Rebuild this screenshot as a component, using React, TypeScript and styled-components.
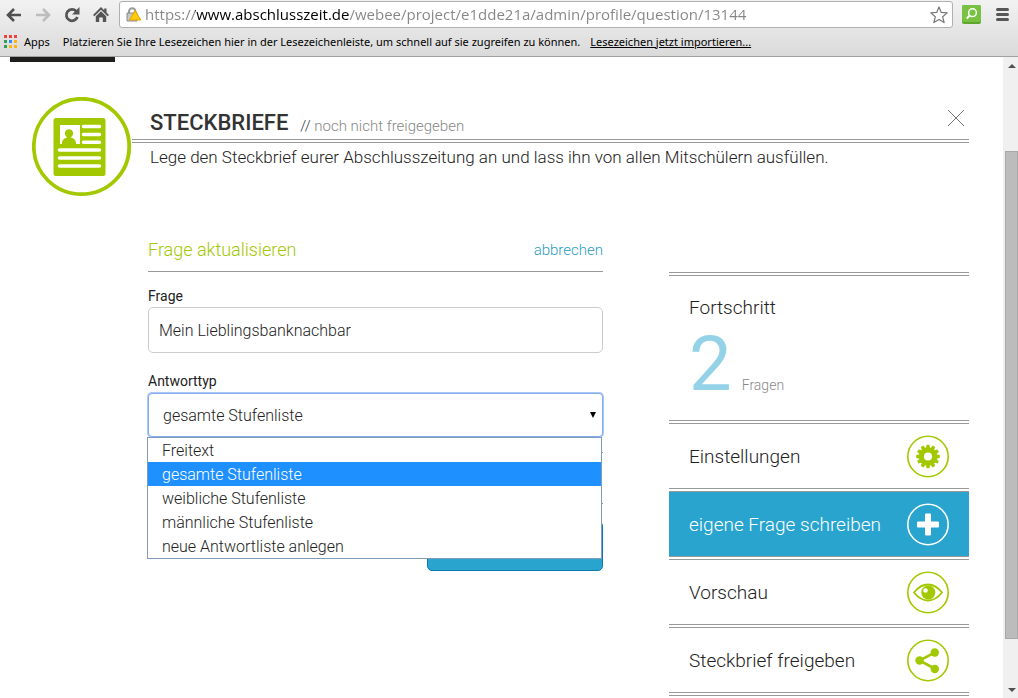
import React, { useState } from "react";
import styled, { createGlobalStyle } from "styled-components";

const GREEN = "#a2c800";
const BLUE = "#28a4cf";

const GlobalStyle = createGlobalStyle`
  *, *::before, *::after { box-sizing: border-box; }
  body { margin: 0; background: #fff; color: #222; font-family: Roboto, sans-serif; font-weight: 300; }
  button, input, select { font: inherit; color: inherit; margin: 0; padding: 0; }
  button { background: none; border: 0; cursor: pointer; }
  a { color: inherit; }
`;

const Window = styled.div`
  display: flex;
  flex-direction: column;
  height: 100vh;
  overflow: hidden;
`;

/* Browser chrome */
const Chrome = styled.header`
  flex: none;
  background: linear-gradient(#f2f2f2, #dadada);
  border-bottom: 1px solid #a0a0a0;
  font-family: "Noto Sans", sans-serif;
  font-weight: 400;
  color: #000;
`;
const Toolbar = styled.div`
  display: flex;
  align-items: center;
  height: 29px;
  padding: 0 3px 0 4px;
`;
const ToolButton = styled.button<{ $width: number }>`
  display: flex;
  align-items: center;
  justify-content: center;
  width: ${(p) => p.$width}px;
  height: 28px;
`;
const Omnibox = styled.div`
  flex: 1;
  display: flex;
  align-items: center;
  height: 27px;
  padding: 0 4px 0 6px;
  background: #fff;
  border: 1px solid #b0b0b0;
  border-radius: 3px;
`;
const Address = styled.input`
  flex: 1;
  min-width: 0;
  height: 24px;
  margin-left: 3px;
  padding-bottom: 2px;
  border: 0;
  outline: 0;
  font-family: "Open Sans", sans-serif;
  font-size: 15px;
  background: linear-gradient(90deg, #858585 0 50px, #000 50px 204px, #858585 204px);
  background-clip: text;
  -webkit-background-clip: text;
  -webkit-text-fill-color: transparent;
`;
const Bookmarks = styled.nav`
  display: flex;
  align-items: center;
  height: 27px;
  padding: 0 4px 3px;
  font-size: 11px;
  white-space: nowrap;
`;
const AppsLink = styled.a`
  display: flex;
  align-items: center;
  gap: 7px;
  margin-right: 13px;
  text-decoration: none;
`;
const ImportLink = styled.a`
  margin-left: 10px;
`;

/* Page */
const Viewport = styled.div`
  flex: 1;
  min-height: 0;
  display: flex;
`;
const Page = styled.main`
  flex: 1;
  min-width: 0;
  overflow: hidden;
  padding-right: 34px;
`;
const Tab = styled.div`
  width: 105px;
  height: 5px;
  margin-left: 10px;
  background: #1e1e1c;
`;
const Hero = styled.section`
  display: flex;
  margin: 35px 0 35px 32px;
`;
const HeroBody = styled.div`
  flex: 1;
`;
const TitleRow = styled.div`
  display: flex;
  align-items: center;
  height: 42px;
  padding: 10px 4px 0 18px;
`;
const Title = styled.h1`
  margin: 0;
  font-size: 22px;
  line-height: 32px;
  font-weight: 500;
  color: #333;
`;
const Status = styled.p`
  flex: 1;
  margin: 5px 0 0 12px;
  font-size: 15px;
  line-height: 24px;
  color: #888;
`;
const Slashes = styled.span`
  color: #333;
`;
const CloseButton = styled.button`
  display: flex;
  margin-bottom: 10px;
`;
const Rule = styled.div`
  height: 4px;
  border: solid #999;
  border-width: 1px 0;
`;
const Lead = styled.p`
  margin: 0 0 0 18px;
  font-size: 17px;
  line-height: 28px;
`;
const Columns = styled.div`
  display: flex;
  align-items: flex-start;
  gap: 66px;
  padding-left: 148px;
`;

/* Question form */
const Form = styled.form`
  flex: 1;
  min-width: 0;
`;
const FormHead = styled.div`
  display: flex;
  align-items: center;
  justify-content: space-between;
  height: 40px;
  padding-bottom: 4px;
  border-bottom: 1px solid #999;
  margin-bottom: 13px;
`;
const FormTitle = styled.h2`
  margin: 0;
  font-size: 18px;
  line-height: 24px;
  font-weight: 300;
  color: ${GREEN};
`;
const Cancel = styled.a`
  font-size: 15px;
  color: #2a9bc6;
  text-decoration: none;
`;
const Field = styled.div`
  margin-bottom: 17px;
`;
const Label = styled.label`
  display: block;
  font-size: 14px;
  line-height: 22px;
  font-weight: 400;
`;
const TextInput = styled.input`
  display: block;
  width: 100%;
  height: 46px;
  padding: 0 10px;
  border: 1px solid #ccc;
  border-radius: 5px;
  outline: 0;
  font-size: 16px;
`;
const SelectBox = styled.div`
  position: relative;
  margin-top: 1px;
`;
const Select = styled.select`
  display: block;
  appearance: none;
  width: 100%;
  height: 44px;
  padding: 0 14px;
  background: #fff;
  border: 1px solid #86aaf0;
  box-shadow: 0 0 0 1px #a9c8f6;
  border-radius: 4px;
  outline: 0;
  font-size: 16px;
`;
const Arrow = styled.svg`
  position: absolute;
  right: 6px;
  top: 18px;
  pointer-events: none;
`;
const Options = styled.ul`
  position: absolute;
  z-index: 1;
  top: 44px;
  left: -1px;
  right: 1px;
  margin: 0;
  padding: 0;
  list-style: none;
  background: #fff;
  border: 1px solid #7f9db9;
`;
const Option = styled.li<{ $selected: boolean }>`
  padding: 2px 0 0 14px;
  font-size: 16px;
  line-height: 22px;
  cursor: default;
  color: ${(p) => (p.$selected ? "#fff" : "#222")};
  background: ${(p) => (p.$selected ? "#1e90ff" : "#fff")};
`;
const Divider = styled.hr<{ $gap: number }>`
  height: 1px;
  margin: ${(p) => p.$gap}px 0 0;
  border: 0;
  background: #999;
`;
const Submit = styled.button`
  display: block;
  width: 176px;
  height: 50px;
  margin: 17px 0 0 auto;
  background: ${BLUE};
  border: 1px solid #0f7aa8;
  border-radius: 5px;
`;

/* Sidebar */
const Sidebar = styled.aside`
  width: 300px;
  padding-top: 40px;
`;
const Progress = styled.section`
  height: 144px;
  padding: 18px 20px 0;
`;
const ProgressTitle = styled.h3`
  margin: 0;
  font-size: 19px;
  line-height: 28px;
  font-weight: 300;
`;
const Count = styled.div`
  display: flex;
  align-items: baseline;
  gap: 10px;
  font-size: 14px;
  color: #888;
`;
const Number = styled.strong`
  font-size: 76px;
  line-height: 84px;
  font-weight: 400;
  color: #93d2e7;
`;
const Action = styled.button<{ $active?: boolean }>`
  display: flex;
  align-items: center;
  justify-content: space-between;
  width: 100%;
  height: 64px;
  padding: 0 20px;
  font-size: 19px;
  text-align: left;
  color: ${(p) => (p.$active ? "#fff" : "#222")};
  background: ${(p) => (p.$active ? BLUE : "#fff")};
`;

/* Scrollbar */
const Scrollbar = styled.div`
  display: flex;
  flex-direction: column;
  width: 15px;
  padding-left: 2px;
  background: #f0f0f0;
`;
const ScrollButton = styled.button`
  display: flex;
  align-items: center;
  justify-content: center;
  height: 17px;
`;
const Track = styled.div<{ $grow: number }>`
  flex: ${(p) => p.$grow};
`;
const Thumb = styled(Track)`
  background: #bcbcbc;
  border: 1px solid #a8a8a8;
`;

const BackIcon = () => (
  <svg width="16" height="14" viewBox="0 0 16 14" fill="none" stroke="#505050" strokeWidth="2.6">
    <path d="M8 1 2 7l6 6M2 7h13" />
  </svg>
);
const ForwardIcon = () => (
  <svg width="16" height="14" viewBox="0 0 16 14" fill="none" stroke="#bdbdbd" strokeWidth="2.6">
    <path d="m8 1 6 6-6 6M14 7H1" />
  </svg>
);
const ReloadIcon = () => (
  <svg width="16" height="16" viewBox="0 0 16 16">
    <path d="M12.2 4.2A5.7 5.7 0 1 0 13.4 10" fill="none" stroke="#555" strokeWidth="2.8" />
    <path d="M15.5 0v7.5H8z" fill="#555" />
  </svg>
);
const HomeIcon = () => (
  <svg width="16" height="16" viewBox="0 0 16 16">
    <path d="M8 0 0 8l1.4 1.2L8 2.8l6.6 6.4L16 8l-2.5-2.5V1.5h-2.3v1.8z" fill="#555" />
    <path d="m8 4.3 5.2 5V15H9.8v-4.5H6.2V15H2.8V9.3z" fill="#555" />
  </svg>
);
const LockIcon = () => (
  <svg width="16" height="16" viewBox="0 0 16 16">
    <path d="M3 7V4.500a3.200 3.200 0 0 1 6.500 0V7" fill="none" stroke="#999" strokeWidth="2" />
    <path d="M1 6h10v8H1z" fill="#c8c8c8" stroke="#888" />
    <path d="M9 3.500 14.800 13H3.500z" fill="#ffcb0b" stroke="#e2a300" strokeLinejoin="round" />
  </svg>
);
const StarIcon = () => (
  <svg width="18" height="18" viewBox="0 0 18 18" fill="#fff" stroke="#777" strokeWidth="1.2" strokeLinejoin="round">
    <path d="m9 1 2.300 5.400 5.900.5-4.500 3.900 1.400 5.800L9 13.500l-5.100 3.100 1.400-5.800L.8 6.900l5.900-.5z" />
  </svg>
);
const ExtensionIcon = () => (
  <svg width="19" height="19" viewBox="0 0 19 19">
    <rect width="19" height="19" rx="2" fill="#5fa62f" />
    <rect width="19" height="17" rx="2" fill="#78c143" />
    <circle cx="10.5" cy="7.7" r="3.9" fill="none" stroke="#fff" strokeWidth="1.5" />
    <path d="m7.700 10.500-3 3" stroke="#fff" strokeWidth="1.8" />
  </svg>
);
const MenuIcon = () => (
  <svg width="13" height="13" viewBox="0 0 13 13" stroke="#555" strokeWidth="3" strokeLinecap="round">
    <path d="M1.500 1.500h10M1.500 6.500h10M1.500 11.500h10" />
  </svg>
);
const AppsIcon = () => (
  <svg width="13" height="13" viewBox="0 0 13 13">
    {["#f0413c", "#f0413c", "#f0413c", "#2fa05a", "#2f8df0", "#fbb416", "#2fa05a", "#fbb416", "#fbb416"].map(
      (c, i) => (
        <rect key={i} x={(i % 3) * 5} y={Math.floor(i / 3) * 5} width="3" height="3" fill={c} />
      )
    )}
  </svg>
);
const ProfileIcon = () => (
  <svg width="100" height="100" viewBox="0 0 100 100">
    <circle cx="49.5" cy="49.5" r="47.7" fill="#fff" stroke={GREEN} strokeWidth="3.8" />
    <rect x="21.5" y="21" width="52" height="58" rx="2.5" fill={GREEN} />
    <path d="M28 28h20v19H28z" fill="#fff" />
    <path
      d="M30 47c0-4 2-6 5.500-6.500-2-1.500-3-3-2.500-5.300.5-2 2-3 4-3s3.700 1 4 3c.5 2.300-.5 3.800-2.500 5.300C42 41 44 43 44 47z"
      fill={GREEN}
    />
    <path
      d="M51.500 29.500h16M51.500 37.500h16M51.500 45.200h16M27.500 53h40M27.500 61h40M27.500 69h40"
      stroke="#fff"
      strokeWidth="3.6"
      strokeLinecap="round"
    />
  </svg>
);
const CloseIcon = () => (
  <svg width="18" height="18" viewBox="0 0 18 18" stroke="#777" strokeWidth="1">
    <path d="m1 1 16 16M17 1 1 17" />
  </svg>
);
const Badge = ({ color, children }: { color: string; children: React.ReactNode }) => (
  <svg width="42" height="43" viewBox="0 0 42 42">
    <circle cx="21" cy="21" r="20.2" fill="none" stroke={color} strokeWidth="1.6" />
    {children}
  </svg>
);
const GearIcon = () => (
  <Badge color={GREEN}>
    <circle cx="21" cy="21" r="6.6" fill="none" stroke={GREEN} strokeWidth="5" />
    {Array.from({ length: 12 }, (_, i) => (
      <path key={i} d="m18.800 13 .8-3.800h2.800l.8 3.800z" fill={GREEN} transform={`rotate(${i * 30} 21 21)`} />
    ))}
  </Badge>
);
const PlusIcon = () => (
  <Badge color="#fff">
    <path
      d="M19 10h4q1 0 1 1v7h7q1 0 1 1v4q0 1-1 1h-7v7q0 1-1 1h-4q-1 0-1-1v-7h-7q-1 0-1-1v-4q0-1 1-1h7v-7q0-1 1-1z"
      fill="#fff"
    />
  </Badge>
);
const EyeIcon = () => (
  <Badge color={GREEN}>
    <path
      d="M7 21c4-5 9-8 14-8s10 3 14 8c-4 5-9 8-14 8s-10-3-14-8z"
      fill="none"
      stroke={GREEN}
      strokeWidth="1.8"
    />
    <circle cx="21.3" cy="21" r="7" fill={GREEN} />
    <circle cx="18.5" cy="19" r="2.3" fill="#fff" />
  </Badge>
);
const ShareIcon = () => (
  <Badge color={GREEN}>
    <path d="M27.500 13.200 12.500 21l15 8" fill="none" stroke={GREEN} strokeWidth="2.6" />
    <circle cx="27.8" cy="13" r="4.2" fill={GREEN} />
    <circle cx="12.5" cy="21" r="4.2" fill={GREEN} />
    <circle cx="27.8" cy="29.5" r="4.2" fill={GREEN} />
  </Badge>
);

const ANSWER_TYPES = [
  "Freitext",
  "gesamte Stufenliste",
  "weibliche Stufenliste",
  "männliche Stufenliste",
  "neue Antwortliste anlegen",
];

const ACTIONS = [
  { label: "Einstellungen", icon: <GearIcon /> },
  { label: "eigene Frage schreiben", icon: <PlusIcon />, active: true },
  { label: "Vorschau", icon: <EyeIcon /> },
  { label: "Steckbrief freigeben", icon: <ShareIcon /> },
];

export default function App() {
  const [answerType, setAnswerType] = useState(ANSWER_TYPES[1]);
  return (
    <Window>
      <GlobalStyle />
      <Chrome>
        <Toolbar>
          <ToolButton $width={20} aria-label="Zurück"><BackIcon /></ToolButton>
          <ToolButton $width={37} aria-label="Vorwärts"><ForwardIcon /></ToolButton>
          <ToolButton $width={21} aria-label="Neu laden"><ReloadIcon /></ToolButton>
          <ToolButton $width={37} aria-label="Startseite"><HomeIcon /></ToolButton>
          <Omnibox>
            <LockIcon />
            <Address
              aria-label="Adresse"
              defaultValue="https://www.abschlusszeit.de/webee/project/e1dde21a/admin/profile/question/13144"
            />
            <StarIcon />
          </Omnibox>
          <ToolButton $width={37} aria-label="Suche"><ExtensionIcon /></ToolButton>
          <ToolButton $width={25} aria-label="Menü"><MenuIcon /></ToolButton>
        </Toolbar>
        <Bookmarks>
          <AppsLink href="#apps"><AppsIcon />Apps</AppsLink>
          <span>Platzieren Sie Ihre Lesezeichen hier in der Lesezeichenleiste, um schnell auf sie zugreifen zu können.</span>
          <ImportLink href="#import">Lesezeichen jetzt importieren...</ImportLink>
        </Bookmarks>
      </Chrome>

      <Viewport>
        <Page>
          <Tab />
          <Hero>
            <ProfileIcon />
            <HeroBody>
              <TitleRow>
                <Title>STECKBRIEFE</Title>
                <Status><Slashes>//</Slashes> noch nicht freigegeben</Status>
                <CloseButton aria-label="Schließen"><CloseIcon /></CloseButton>
              </TitleRow>
              <Rule />
              <Lead>Lege den Steckbrief eurer Abschlusszeitung an und lass ihn von allen Mitschülern ausfüllen.</Lead>
            </HeroBody>
          </Hero>

          <Columns>
            <Form onSubmit={(e) => e.preventDefault()}>
              <FormHead>
                <FormTitle>Frage aktualisieren</FormTitle>
                <Cancel href="#abbrechen">abbrechen</Cancel>
              </FormHead>
              <Field>
                <Label htmlFor="frage">Frage</Label>
                <TextInput id="frage" defaultValue="Mein Lieblingsbanknachbar" />
              </Field>
              <Label htmlFor="antworttyp">Antworttyp</Label>
              <SelectBox>
                <Select id="antworttyp" value={answerType} onChange={(e) => setAnswerType(e.target.value)}>
                  {ANSWER_TYPES.map((t) => (
                    <option key={t}>{t}</option>
                  ))}
                </Select>
                <Arrow width="8" height="7" viewBox="0 0 8 7"><path d="M1 1h6L4 7z" fill="#000" /></Arrow>
                <Options role="listbox" aria-label="Antworttyp">
                  {ANSWER_TYPES.map((t) => (
                    <Option
                      key={t}
                      role="option"
                      aria-selected={t === answerType}
                      $selected={t === answerType}
                      onClick={() => setAnswerType(t)}
                    >
                      {t}
                    </Option>
                  ))}
                </Options>
              </SelectBox>
              <Divider $gap={15} />
              <Divider $gap={50} />
              <Submit type="submit" aria-label="Speichern" />
            </Form>

            <Sidebar>
              <Rule />
              <Progress>
                <ProgressTitle>Fortschritt</ProgressTitle>
                <Count><Number>2</Number>Fragen</Count>
              </Progress>
              <Rule />
              {ACTIONS.map((a) => (
                <React.Fragment key={a.label}>
                  <Action $active={a.active}>{a.label}{a.icon}</Action>
                  <Rule />
                </React.Fragment>
              ))}
            </Sidebar>
          </Columns>
        </Page>
        <Scrollbar>
          <ScrollButton aria-label="Nach oben">
            <svg width="8" height="4" viewBox="0 0 8 4"><path d="M0 4 4 0l4 4z" fill="#505050" /></svg>
          </ScrollButton>
          <Track $grow={77} />
          <Thumb $grow={488} />
          <Track $grow={42} />
          <ScrollButton aria-label="Nach unten">
            <svg width="8" height="4" viewBox="0 0 8 4"><path d="M0 0h8L4 4z" fill="#505050" /></svg>
          </ScrollButton>
        </Scrollbar>
      </Viewport>
    </Window>
  );
}
